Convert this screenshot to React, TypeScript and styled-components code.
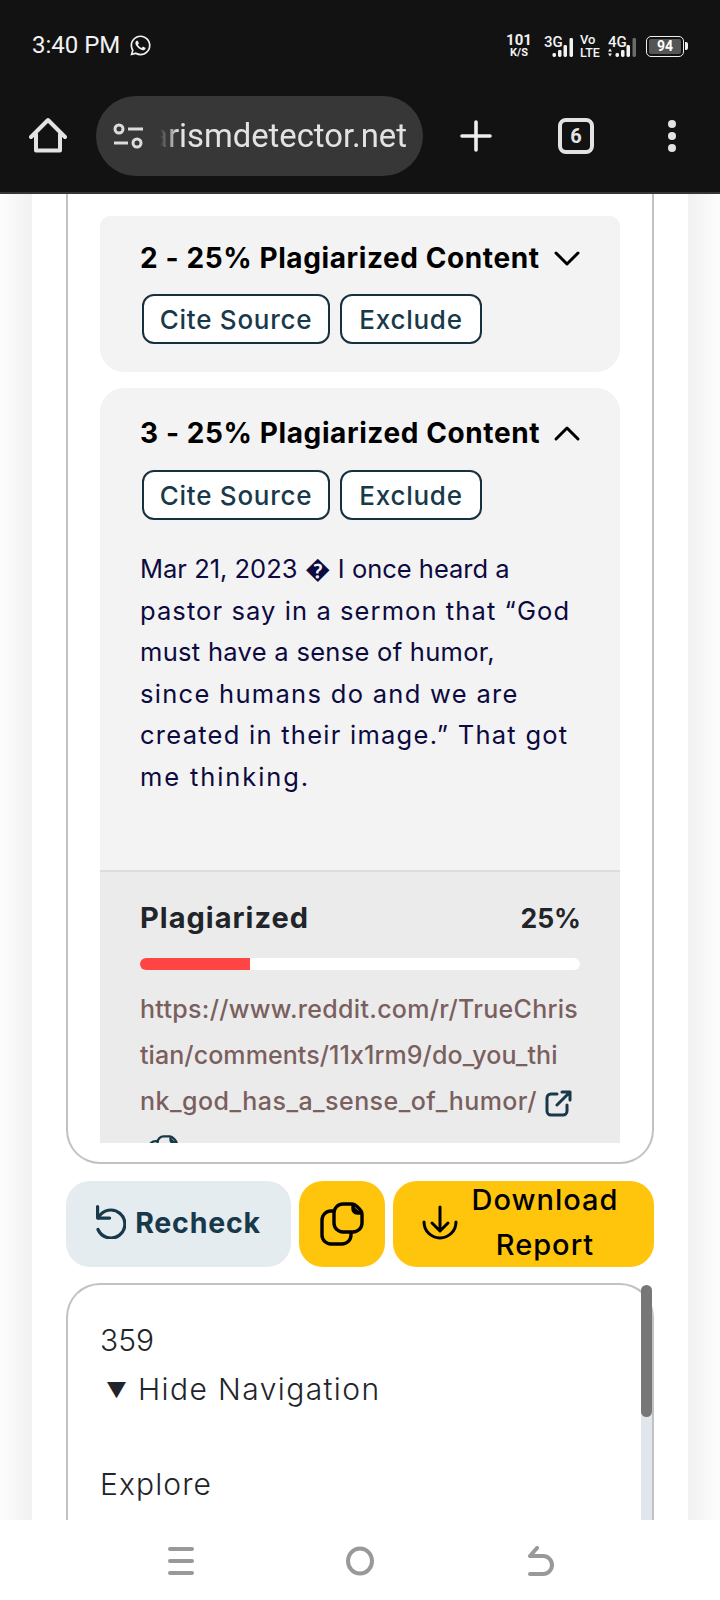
import React from "react";
import styled, { createGlobalStyle } from "styled-components";
import { FaWhatsapp } from "react-icons/fa";

const Global = createGlobalStyle`
  html, body { margin: 0; padding: 0; background: #fff; }
  * { box-sizing: border-box; }
`;

const Screen = styled.div`
  width: 720px; height: 1600px; overflow: hidden; display: flex; flex-direction: column;
  font-family: Inter, "Liberation Sans", sans-serif; background: #fff;
`;
const Chrome = styled.header`
  height: 194px; flex: none; background: #121212; border-bottom: 2px solid #35363a;
  display: flex; flex-direction: column; font-family: Roboto, sans-serif; color: #eee;
`;
const StatusBar = styled.div`
  height: 96px; padding: 0 32px 6px 32px; display: flex; align-items: center; justify-content: space-between;
`;
const TimeGroup = styled.div`display: flex; align-items: center; gap: 9px; font-size: 24px; color: #f2f2f2;`;
const Indicators = styled.div`display: flex; align-items: center; color: #f2f2f2; margin-top: 2px;`;
const Speed = styled.div`
  display: flex; flex-direction: column; align-items: center; font-weight: 700; font-size: 15px; line-height: 14px; width: 24px; margin-right: 12px;
  & small { display: block; font-size: 11px; line-height: 12px; }
`;
const Net = styled.div`
  width: 30px; height: 21px; margin-right: ${p => p.$m}px; display: grid;
  & > * { grid-area: 1 / 1; }
`;
const NetLabel = styled.span`
  font-size: 15px; font-weight: 500; line-height: 12px; align-self: start; justify-self: start; margin-left: ${p => p.$left}px;
`;
const Stack = styled.div`
  display: flex; flex-direction: column; align-items: flex-start; font-size: 13px; font-weight: 500; line-height: 13.5px; width: 26px;
  & span { font-size: 12.5px; }
`;
const Battery = styled.div`
  width: 38px; height: 21px; border: 1.5px solid #eee; border-radius: 5px; padding: 2px; margin-left: 10px;
  display: flex;
`;
const BatteryFill = styled.div`
  flex: 1; background: #555; border-radius: 2px; color: #fff; font-size: 14px; font-weight: 700; line-height: 14px; text-align: center;
`;
const BatteryTip = styled.div`width: 3px; height: 8px; background: #eee; border-radius: 0 2px 2px 0; margin-left: 1px;`;
const Toolbar = styled.div`
  height: 80px; padding: 0 0 0 29px; display: flex; align-items: center;
`;
const UrlPill = styled.div`
  width: 327px; height: 80px; margin-left: 29px; background: #373737; border-radius: 40px;
  display: flex; align-items: center; padding-left: 17px; gap: 17px;
`;
const UrlText = styled.div`
  width: 247px; display: flex; justify-content: flex-end; font-size: 32.8px; color: #e3e3e3; white-space: nowrap;
  -webkit-mask-image: linear-gradient(90deg, transparent 0, #000 18px);
  mask-image: linear-gradient(90deg, transparent 0, #000 18px);
`;
const PlusSlot = styled.div`margin-left: 37px; width: 32px; height: 32px; display: flex;`;
const TabCount = styled.div`
  margin-left: 66px; width: 36px; height: 36px; border: 4px solid #e3e3e3; border-radius: 8px;
  display: flex; align-items: center; justify-content: center; font-size: 20px; font-weight: 700; color: #e3e3e3;
`;
const Dots = styled.div`
  margin-left: 74px; display: flex; flex-direction: column; gap: 4px;
  & i { width: 8px; height: 8px; border-radius: 50%; background: #e3e3e3; display: block; }
`;

const Viewport = styled.main`
  flex: 1; min-height: 0; overflow: hidden; padding: 0 32px;
  background: linear-gradient(90deg, #fdfdfd 0, #f1f1f1 32px, #f1f1f1 688px, #fdfdfd 100%);
`;
const Column = styled.div`
  height: 100%; background: #fff; padding: 0 34px; display: flex; flex-direction: column;
`;
const ResultCard = styled.section`
  height: 970px; flex: none; border: 2px solid #c2c2c2; border-top: 0; border-radius: 0 0 34px 34px; padding: 22px 32px 19px;
`;
const Scroller = styled.div`
  height: 100%; overflow: hidden; display: flex; flex-direction: column; gap: 16px;
`;
const Panel = styled.article`
  flex: none; background: #f3f3f3; border-radius: ${p => (p.$clip ? "10px 10px 24px 24px" : "24px 24px 0 0")};
  ${p => (p.$clip ? "height: 156px;" : "flex: 1; min-height: 0; overflow: hidden;")}
  display: flex; flex-direction: column;
`;
const PanelHead = styled.div`padding: 0 39px 0 40px;`;
const TitleRow = styled.div`
  height: 34px; margin-top: ${p => p.$top}px; display: flex; align-items: center; justify-content: space-between;
`;
const Title = styled.h3`
  margin: 0; font-size: 28px; font-weight: 700; color: #000; letter-spacing: 0.6px; white-space: nowrap;
`;
const Actions = styled.div`margin-top: ${p => p.$top}px; padding-left: 2px; display: flex; gap: 10px;`;
const Outline = styled.button`
  height: 50px; width: ${p => p.$w}px; background: #fff; border: 2px solid #17303f; border-radius: 12px; padding: 0;
  font: 500 26px Inter, sans-serif; color: #17394a; letter-spacing: 0.75px;
`;
const Body = styled.p`
  margin: 28px 0 0; padding: 0 40px; font-size: 25.5px; line-height: 41.5px; color: #0c0a3e; white-space: nowrap;
`;
const TextLine = styled.span<{ $ls: number }>`
  display: block; letter-spacing: ${p => p.$ls}px;
`;
const Foot = styled.div`
  margin-top: 73px; flex: 1; background: #ebebeb; border-top: 2px solid #dcdcdc; padding: 29px 40px 0;
`;
const FootHead = styled.div`
  display: flex; justify-content: space-between; align-items: center; font-size: 26.5px; line-height: 34px; font-weight: 700; color: #212529;
`;
const FootLabel = styled.span`font-size: 29px; letter-spacing: 1px;`;
const FootValue = styled.span`margin-right: -1px;`;
const Track = styled.div`height: 12px; margin-top: 23px; background: #fff; border-radius: 6px; overflow: hidden;`;
const Fill = styled.div`height: 100%; background: #ff4444;`;
const Url = styled.div`
  margin-top: 16px; font-size: 25px; font-weight: 500; line-height: 46px; color: #7a5f5f; white-space: nowrap;
  & svg { vertical-align: -7px; margin-left: 8px; }
`;
const CopySmall = styled.div`margin: 11px 0 0 8px; height: 30px;`;

const ButtonRow = styled.div`margin-top: 17px; flex: none; display: flex; gap: 8px; height: 86px;`;
const RecheckBtn = styled.button`
  width: 225px; border: 0; border-radius: 24px; background: #e4ecf0; color: #17394a; padding: 0 0 4px;
  display: flex; align-items: center; justify-content: center; gap: 9px; font: 700 28.5px Inter, sans-serif; letter-spacing: 0.8px;
`;
const CopyBtn = styled.button`
  width: 86px; border: 0; border-radius: 24px; background: #ffc50d; padding: 0;
  display: flex; align-items: center; justify-content: center;
`;
const DownloadBtn = styled.button`
  width: 261px; border: 0; border-radius: 24px; background: #ffc50d; color: #000; padding: 0 0 0 28px;
  display: flex; align-items: center; gap: 11px; font: 500 29px/45px Inter, sans-serif; letter-spacing: 1px;
`;
const BtnLabel = styled.span`text-align: center; width: 150px; margin-top: -4px;`;
const NavCard = styled.section`
  position: relative; margin-top: 16px; flex: 1; border: 2px solid #c2c2c2; border-bottom: 0; border-radius: 34px 34px 0 0; padding: 31px 32px 0;
  font-weight: 300; font-size: 30px; color: #212529; letter-spacing: 1.1px;
`;
const NavLine = styled.div<{ $top?: number; $ls?: number }>`
  line-height: 48px; margin-top: ${p => p.$top || 0}px; letter-spacing: ${p => p.$ls ?? 1.1}px;
`;
const Tick = styled.span`display: inline-block; width: 38px; padding-left: 6px; font-size: 21px; letter-spacing: 0; vertical-align: 2px;`;
const Scrollbar = styled.div`
  position: absolute; right: 0; top: 0; bottom: 0; width: 11px; background: #e1e5ec; border-radius: 6px 6px 0 0;
`;
const Thumb = styled.div`width: 100%; height: 132px; background: #777; border-radius: 6px;`;
const BottomNav = styled.nav`
  height: 80px; flex: none; background: #fff; display: flex; align-items: flex-start; padding: 26px 0 0 168px;
  & svg { display: block; }
`;
const NavSlot = styled.div`margin-right: ${p => p.$m}px;`;

const HomeIcon = () => (
  <svg width="38" height="38" viewBox="0 0 38 38" fill="none" stroke="#e3e3e3" strokeWidth="4" strokeLinejoin="round" strokeLinecap="round">
    <path d="M2 20 19 3l17 17M7 17v16.5h24V17" />
  </svg>
);
const SliderIcon = () => (
  <svg width="30" height="26" viewBox="0 0 30 26" fill="none" stroke="#dcdcdc" strokeWidth="3">
    <circle cx="6" cy="6" r="4" /><path d="M15 6h15M1 20h14" /><circle cx="24" cy="20" r="4" />
  </svg>
);
const Plus = () => (
  <svg width="32" height="32" viewBox="0 0 32 32" stroke="#eee" strokeWidth="3.6" strokeLinecap="round"><path d="M16 2v28M2 16h28" /></svg>
);
const Chevron = ({ up }: { up?: boolean }) => (
  <svg width="28" height="18" viewBox="0 0 28 18" fill="none" stroke="#000" strokeWidth="3" strokeLinecap="round" strokeLinejoin="round">
    <path d={up ? "M3 15 14 4l11 11" : "M3 4l11 11L25 4"} />
  </svg>
);
const Signal = ({ dim }: { dim?: boolean }) => (
  <svg width="30" height="19" viewBox="0 0 30 19" fill="#f2f2f2" style={{ alignSelf: "end" }}>
    {[[9.5, 4], [15, 7], [20.5, 12], [26.5, 19]].map(([x, h], i) => (
      <rect key={i} x={x} y={19 - h} width="3.5" height={h} rx="1.4" opacity={dim && i === 3 ? 0.4 : 1} />
    ))}
    {dim && <path d="M4 10.5l2 3H2zM4 18.5l-2-3h4z" />}
  </svg>
);
const External = () => (
  <svg width="27" height="27" viewBox="0 0 27 27" fill="none" stroke="#17394a" strokeWidth="3" strokeLinecap="round" strokeLinejoin="round">
    <path d="M12 4H6a4 4 0 0 0-4 4v13a4 4 0 0 0 4 4h12a4 4 0 0 0 4-4v-6M12 15 25 2M17 2h8v8" />
  </svg>
);
const CopyLines = ({ size, stroke, color }: { size: number; stroke: number; color: string }) => (
  <svg width={size} height={size} viewBox="0 0 44 44" fill="none" stroke={color} strokeWidth={stroke} strokeLinejoin="round" strokeLinecap="round">
    <path d="M14 9h-3a9 9 0 0 0-9 9v15a9 9 0 0 0 9 9h11a9 9 0 0 0 9-9v-2" />
    <path d="M23 2h9c2 0 3.5 1 5 2.5l2.500 2.500c1.500 1.500 2.500 3 2.500 5v9a9 9 0 0 1-9 9H23a9 9 0 0 1-9-9V11a9 9 0 0 1 9-9Z" />
    <path d="M33 4v3a4 4 0 0 0 4 4h4" fill={color} />
  </svg>
);
const Rotate = () => (
  <svg width="30" height="34" viewBox="0 0 30 34" fill="none" stroke="#17394a" strokeWidth="3.2" strokeLinecap="round" strokeLinejoin="round">
    <path d="M1.600 1.600v11.500h12" />
    <path d="M2.500 12.500A14 14 0 1 1 2 24.500" />
  </svg>
);
const DownloadIcon = () => (
  <svg width="38" height="38" viewBox="0 0 38 38" fill="none" stroke="#000" strokeWidth="3" strokeLinecap="round" strokeLinejoin="round">
    <path d="M19 2v24M11 18l8 8 8-8" /><path d="M3 17a16 16 0 0 0 32 0" />
  </svg>
);
const Menu = () => (
  <svg width="26" height="30" viewBox="0 0 26 30" stroke="#999" strokeWidth="4" strokeLinecap="round"><path d="M2 3h22M2 15h22M2 27h22" /></svg>
);
const Circle = () => (
  <svg width="28" height="30" viewBox="0 0 28 30" fill="none" stroke="#999" strokeWidth="4"><ellipse cx="14" cy="15" rx="12" ry="12.6" /></svg>
);
const Back = () => (
  <svg width="28" height="30" viewBox="0 0 28 30" fill="none" stroke="#999" strokeWidth="4" strokeLinecap="round" strokeLinejoin="round">
    <path d="M3 28h13a9 9 0 0 0 0-18H3M10 2 3 10" />
  </svg>
);

export default function App() {
  return (
    <Screen>
      <Global />
      <Chrome>
        <StatusBar>
          <TimeGroup>3:40 PM <FaWhatsapp size={23} /></TimeGroup>
          <Indicators>
            <Speed>101<small>K/S</small></Speed>
            <Net $m={7}><NetLabel $left={1}>3G</NetLabel><Signal /></Net>
            <Stack>Vo<span>LTE</span></Stack>
            <Net $m={0}><NetLabel $left={2}>4G</NetLabel><Signal dim /></Net>
            <Battery><BatteryFill>94</BatteryFill></Battery>
            <BatteryTip />
          </Indicators>
        </StatusBar>
        <Toolbar>
          <HomeIcon />
          <UrlPill>
            <SliderIcon />
            <UrlText>arismdetector.net</UrlText>
          </UrlPill>
          <PlusSlot><Plus /></PlusSlot>
          <TabCount>6</TabCount>
          <Dots><i /><i /><i /></Dots>
        </Toolbar>
      </Chrome>
      <Viewport>
        <Column>
          <ResultCard>
            <Scroller>
              <Panel $clip>
                <PanelHead>
                  <TitleRow $top={25}><Title>2 - 25% Plagiarized Content</Title><Chevron /></TitleRow>
                  <Actions $top={19}><Outline $w={188}>Cite Source</Outline><Outline $w={142}>Exclude</Outline></Actions>
                </PanelHead>
              </Panel>
              <Panel>
                <PanelHead>
                  <TitleRow $top={28}><Title>3 - 25% Plagiarized Content</Title><Chevron up /></TitleRow>
                  <Actions $top={20}><Outline $w={188}>Cite Source</Outline><Outline $w={142}>Exclude</Outline></Actions>
                </PanelHead>
                <Body>
                  <TextLine $ls={0}>Mar 21, 2023 {"\uFFFD"} I once heard a</TextLine>
                  <TextLine $ls={1.09}>pastor say in a sermon that “God</TextLine>
                  <TextLine $ls={0.3}>must have a sense of humor,</TextLine>
                  <TextLine $ls={1.3}>since humans do and we are</TextLine>
                  <TextLine $ls={1.26}>created in their image.” That got</TextLine>
                  <TextLine $ls={1.9}>me thinking.</TextLine>
                </Body>
                <Foot>
                  <FootHead><FootLabel>Plagiarized</FootLabel><FootValue>25%</FootValue></FootHead>
                  <Track><Fill style={{ width: "25%" }} /></Track>
                  <Url>
                    <TextLine $ls={0.3}>https://www.reddit.com/r/TrueChris</TextLine>
                    <TextLine $ls={0.08}>tian/comments/11x1rm9/do_you_thi</TextLine>
                    <TextLine $ls={0.45}>nk_god_has_a_sense_of_humor/<External /></TextLine>
                  </Url>
                  <CopySmall><CopyLines size={30} stroke={3.4} color="#17394a" /></CopySmall>
                </Foot>
              </Panel>
            </Scroller>
          </ResultCard>
          <ButtonRow>
            <RecheckBtn><Rotate />Recheck</RecheckBtn>
            <CopyBtn><CopyLines size={44} stroke={3.4} color="#000" /></CopyBtn>
            <DownloadBtn><DownloadIcon /><BtnLabel>Download Report</BtnLabel></DownloadBtn>
          </ButtonRow>
          <NavCard>
            <NavLine $ls={0}>359</NavLine>
            <NavLine $top={1} $ls={1.4}><Tick>▼</Tick>Hide Navigation</NavLine>
            <NavLine $top={45}>Explore</NavLine>
            <Scrollbar><Thumb /></Scrollbar>
          </NavCard>
        </Column>
      </Viewport>
      <BottomNav>
        <NavSlot $m={152}><Menu /></NavSlot>
        <NavSlot $m={153}><Circle /></NavSlot>
        <NavSlot $m={0}><Back /></NavSlot>
      </BottomNav>
    </Screen>
  );
}
